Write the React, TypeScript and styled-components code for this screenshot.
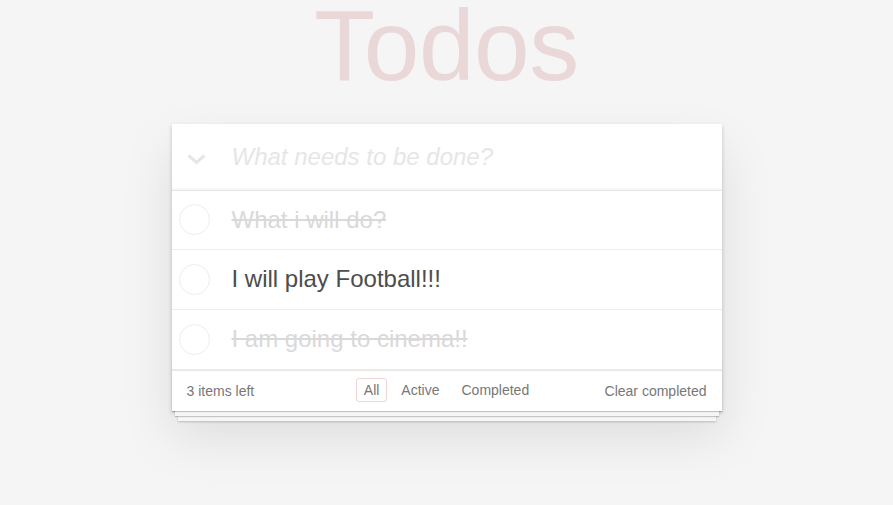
import React, { useState } from "react";
import styled, { createGlobalStyle } from "styled-components";

interface Todo {
  id: number;
  title: string;
  completed: boolean;
}

const initialTodos: Todo[] = [
  { id: 1, title: "What i will do?", completed: true },
  { id: 2, title: "I will play Football!!!", completed: false },
  { id: 3, title: "I am going to cinema!!", completed: true },
];

const GlobalStyle = createGlobalStyle`
  html {
    background: #f5f5f5;
  }
  html, body {
    margin: 0;
    padding: 0;
  }
  body {
    min-height: 100vh;
    background: #f5f5f5;
    color: #4d4d4d;
    font-family: "Liberation Sans", Arial, Helvetica, sans-serif;
    font-size: 14px;
    line-height: 1.4em;
    -webkit-font-smoothing: antialiased;
  }
`;

const Page = styled.div`
  min-width: 230px;
  max-width: 550px;
  margin: 0 auto;
  display: flex;
  flex-direction: column;
`;

const Title = styled.h1`
  margin: 0 0 34px 0;
  font-size: 100px;
  font-weight: 100;
  line-height: 90px;
  letter-spacing: -0.4px;
  text-align: center;
  color: rgba(175, 47, 47, 0.15);
`;

const TodoApp = styled.section`
  background: #fff;
  position: relative;
  margin-bottom: 40px;
  box-shadow: 0 2px 4px 0 rgba(0, 0, 0, 0.2), 0 25px 50px 0 rgba(0, 0, 0, 0.1);
`;

const Header = styled.header`
  display: flex;
  align-items: center;
  box-shadow: inset 0 -2px 1px rgba(0, 0, 0, 0.03);
`;

const ToggleAll = styled.div`
  width: 60px;
  flex-shrink: 0;
  display: flex;
  align-items: center;
  padding: 5px 0 0 15px;
  box-sizing: border-box;
`;

const NewTodo = styled.input`
  flex: 1;
  min-width: 0;
  border: none;
  outline: none;
  background: transparent;
  padding: 16px 16px 16px 0;
  font-family: inherit;
  font-size: 24px;
  line-height: 1.4em;
  color: inherit;

  &::placeholder {
    font-style: italic;
    font-weight: 300;
    color: #e6e6e6;
  }
`;

const List = styled.ul`
  margin: 0;
  padding: 0;
  list-style: none;
  border-top: 1px solid #e6e6e6;
`;

const Item = styled.li`
  display: flex;
  align-items: center;
  font-size: 24px;
  border-bottom: 1px solid #ededed;
`;

const CheckCell = styled.div`
  width: 60px;
  flex-shrink: 0;
  display: flex;
  align-items: center;
  padding-left: 7px;
  box-sizing: border-box;
`;

const Circle = styled.span`
  display: block;
  width: 31px;
  height: 31px;
  border: 1px solid #ededed;
  border-radius: 50%;
  box-sizing: border-box;
  cursor: pointer;
`;

const Label = styled.label<{ $done: boolean }>`
  flex: 1;
  padding: 15px 15px 15px 0;
  line-height: 1.2;
  word-break: break-all;
  color: ${(p) => (p.$done ? "#d9d9d9" : "#4d4d4d")};
  text-decoration: ${(p) => (p.$done ? "line-through" : "none")};
`;

const Footer = styled.footer`
  position: relative;
  display: grid;
  grid-template-columns: 1fr auto 1fr;
  grid-template-rows: 20px;
  align-items: center;
  height: 20px;
  padding: 10px 15px;
  color: #777;
  border-top: 1px solid #e6e6e6;

  &::before {
    content: "";
    position: absolute;
    right: 0;
    bottom: 0;
    left: 0;
    height: 50px;
    overflow: hidden;
    box-shadow: 0 1px 1px rgba(0, 0, 0, 0.2), 0 8px 0 -3px #f6f6f6,
      0 9px 1px -3px rgba(0, 0, 0, 0.2), 0 16px 0 -6px #f6f6f6,
      0 17px 2px -6px rgba(0, 0, 0, 0.2);
    pointer-events: none;
  }
`;

const Count = styled.span`
  position: relative;
  justify-self: start;
  line-height: 20px;
`;

const Filters = styled.ul`
  position: relative;
  display: flex;
  margin: -1px 0 0 0;
  padding: 0;
  list-style: none;
`;

const FilterLink = styled.a<{ $selected: boolean }>`
  display: block;
  margin: 3px;
  padding: 3px 7px;
  line-height: 16px;
  color: inherit;
  text-decoration: none;
  border: 1px solid
    ${(p) => (p.$selected ? "rgba(175, 47, 47, 0.2)" : "transparent")};
  border-radius: 3px;
  cursor: pointer;
`;

const ClearButton = styled.button`
  position: relative;
  justify-self: end;
  margin: 0;
  padding: 0;
  border: none;
  background: none;
  font-family: inherit;
  font-size: 14px;
  line-height: 20px;
  color: inherit;
  cursor: pointer;
`;

const Chevron = () => (
  <svg width="19" height="11" viewBox="0 0 19 11">
    <polyline
      points="1.5,1.5 9.5,8.5 17.5,1.5"
      fill="none"
      stroke="#e6e6e6"
      strokeWidth="3"
    />
  </svg>
);

const filters = ["All", "Active", "Completed"];

const App: React.FC = () => {
  const [todos, setTodos] = useState<Todo[]>(initialTodos);
  const [filter, setFilter] = useState("All");

  const toggle = (id: number) =>
    setTodos(todos.map((t) => (t.id === id ? { ...t, completed: !t.completed } : t)));

  const visible = todos.filter((t) =>
    filter === "All" ? true : filter === "Active" ? !t.completed : t.completed
  );

  return (
    <>
      <GlobalStyle />
      <Page>
        <Title>Todos</Title>
        <TodoApp>
          <Header>
            <ToggleAll>
              <Chevron />
            </ToggleAll>
            <NewTodo placeholder="What needs to be done?" />
          </Header>
          <List>
            {visible.map((todo) => (
              <Item key={todo.id}>
                <CheckCell>
                  <Circle onClick={() => toggle(todo.id)} />
                </CheckCell>
                <Label $done={todo.completed}>{todo.title}</Label>
              </Item>
            ))}
          </List>
          <Footer>
            <Count>{todos.length} items left</Count>
            <Filters>
              {filters.map((f) => (
                <li key={f}>
                  <FilterLink $selected={filter === f} onClick={() => setFilter(f)}>
                    {f}
                  </FilterLink>
                </li>
              ))}
            </Filters>
            <ClearButton>Clear completed</ClearButton>
          </Footer>
        </TodoApp>
      </Page>
    </>
  );
};

export default App;
